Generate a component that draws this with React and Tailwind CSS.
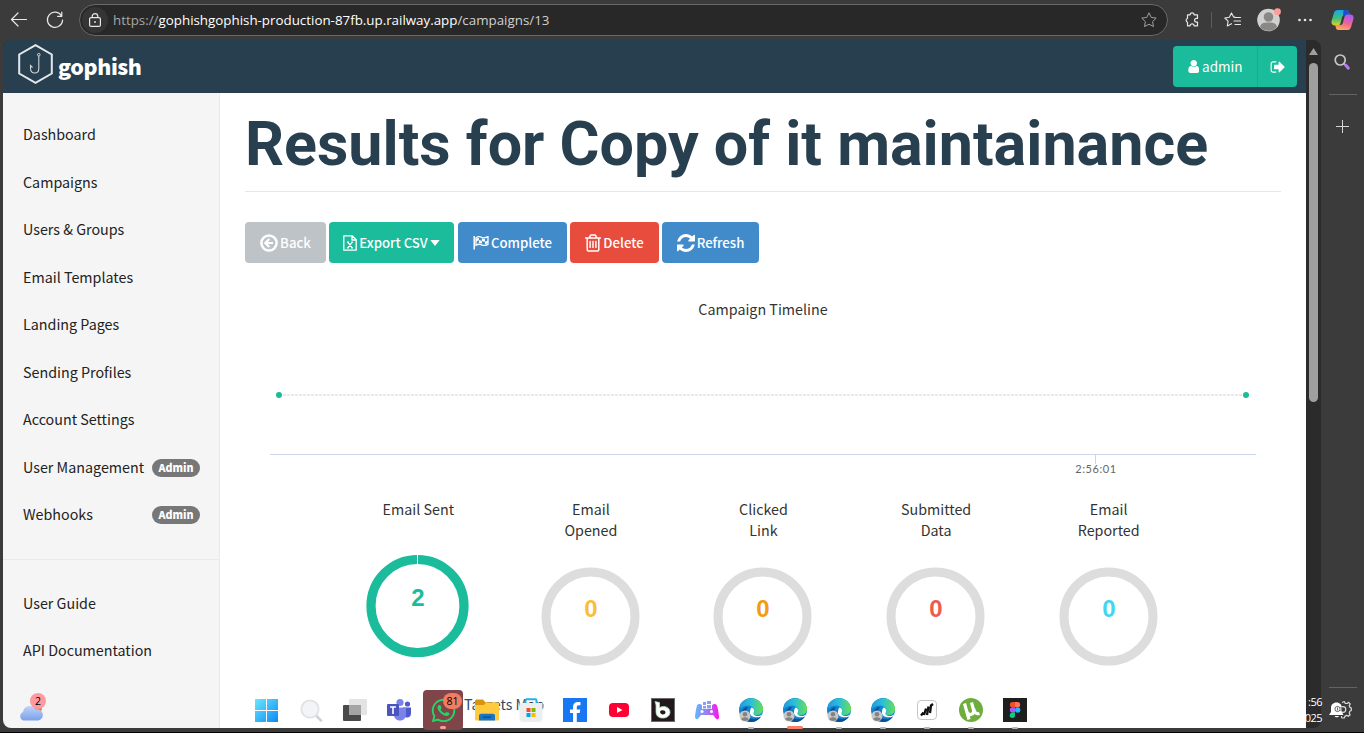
import { FaWhatsapp } from "react-icons/fa";

const FA = {
  user: {
    box: "256 128 1280 1536",
    d: "M1536 1399q0 109-62.5 187t-150.5 78h-854q-88 0-150.5-78t-62.5-187q0-85 8.5-160.5t31.5-152 58.5-131 94-89 134.5-34.5q131 128 313 128t313-128q76 0 134.5 34.5t94 89 58.5 131 31.5 152 8.5 160.5zm-256-887q0 159-112.5 271.5t-271.5 112.5-271.5-112.5-112.5-271.5 112.5-271.5 271.5-112.5 271.5 112.5 112.5 271.5z",
  },
  signOut: {
    box: "0 0 1792 1792",
    d: "M704 1440q0 4 1 20t.5 26.5-3 23.5-10 19.5-20.5 6.5h-320q-119 0-203.5-84.5t-84.5-203.5v-704q0-119 84.5-203.5t203.5-84.5h320q13 0 22.5 9.5t9.5 22.5q0 4 1 20t.5 26.5-3 23.5-10 19.5-20.5 6.5h-320q-66 0-113 47t-47 113v704q0 66 47 113t113 47h312l11.5 1 11.5 3 8 5.5 7 9 2 13.5zm928-544q0 26-19 45l-544 544q-19 19-45 19t-45-19-19-45v-288h-448q-26 0-45-19t-19-45v-384q0-26 19-45t45-19h448v-288q0-26 19-45t45-19 45 19l544 544q19 19 19 45z",
  },
  refresh: {
    box: "128 128 1536 1536",
    d: "M1639 1056q0 5-1 7-64 268-268 434.5t-478 166.5q-146 0-282.5-55t-243.5-157l-129 129q-19 19-45 19t-45-19-19-45v-448q0-26 19-45t45-19h448q26 0 45 19t19 45-19 45l-137 137q71 66 161 102t187 36q134 0 250-65t186-179q11-17 53-117 8-23 30-23h192q13 0 22.5 9.5t9.5 22.5zm25-800v448q0 26-19 45t-45 19h-448q-26 0-45-19t-19-45 19-45l138-138q-148-137-349-137-134 0-250 65t-186 179q-11 17-53 117-8 23-30 23h-199q-13 0-22.5-9.5t-9.5-22.5v-7q65-268 270-434.5t480-166.5q146 0 284 55.5t245 156.5l130-129q19-19 45-19t45 19 19 45z",
  },
  trash: {
    box: "192 128 1408 1536",
    d: "M704 736v576q0 14-9 23t-23 9h-64q-14 0-23-9t-9-23v-576q0-14 9-23t23-9h64q14 0 23 9t9 23zm256 0v576q0 14-9 23t-23 9h-64q-14 0-23-9t-9-23v-576q0-14 9-23t23-9h64q14 0 23 9t9 23zm256 0v576q0 14-9 23t-23 9h-64q-14 0-23-9t-9-23v-576q0-14 9-23t23-9h64q14 0 23 9t9 23zm128 724v-948h-896v948q0 22 7 40.5t14.5 27 10.5 8.5h832q3 0 10.5-8.5t14.5-27 7-40.5zm-672-1076h448l-48-117q-7-9-17-11h-317q-10 2-17 11zm928 32v64q0 14-9 23t-23 9h-96v948q0 83-47 143.5t-113 60.5h-832q-66 0-113-58.5t-47-141.5v-952h-96q-14 0-23-9t-9-23v-64q0-14 9-23t23-9h309l70-167q15-37 54-63t79-26h320q40 0 79 26t54 63l70 167h309q14 0 23 9t9 23z",
  },
};

function Glyph({ name, className }) {
  return (
    <svg viewBox={FA[name].box} fill="currentColor" className={`shrink-0 ${className}`}>
      <path d={FA[name].d} />
    </svg>
  );
}

function StarShape({ className }) {
  return (
    <svg viewBox="0 0 16 16" className={className} fill="none" stroke="currentColor" strokeWidth="1" strokeLinejoin="round">
      <path d="M8 .8l2.2 4.6 5 .7-3.6 3.5.9 5L8 12.2l-4.5 2.4.9-5L.8 6.1l5-.7z" />
    </svg>
  );
}

function BrowserBar() {
  return (
    <div className="flex h-10 shrink-0 items-center pl-[10px] text-[#e8e8e8]">
      <svg className="h-4 w-[18px] shrink-0" viewBox="0 0 18 16" fill="none" stroke="currentColor" strokeWidth="1.2" strokeLinecap="round" strokeLinejoin="round">
        <path d="M16.5 7.500H1.500M8 1L1.500 7.500 8 14" />
      </svg>
      <svg className="ml-[18px] h-[18px] w-[18px] shrink-0" viewBox="0 0 18 18" fill="none" stroke="currentColor" strokeWidth="1.2" strokeLinecap="round" strokeLinejoin="round">
        <path d="M15.600 5A7.600 7.600 0 1 0 16.600 9M15.800 1.200V5.300H11.600" />
      </svg>
      <div className="ml-[15px] flex h-[32px] w-[1089px] shrink-0 items-center rounded-full border border-[#686868] bg-[#282828] pl-[2px] pr-[10px]">
        <div className="flex h-[26px] w-[26px] items-center justify-center rounded-full bg-[#353535]">
          <svg className="h-[14px] w-3" viewBox="0 0 12 14" fill="none" stroke="currentColor" strokeWidth="1.2">
            <rect x=".6" y="4.600" width="10.800" height="8.800" rx="1.500" />
            <path d="M3.200 4.600V3.400a2.800 2.800 0 0 1 5.600 0v1.200" />
            <circle cx="6" cy="9" r=".9" fill="currentColor" stroke="none" />
          </svg>
        </div>
        <div className="ml-[5px] whitespace-pre font-['Open_Sans','Noto_Sans',sans-serif] text-[13.350px] leading-5 text-[#a6a6a6]">
          https://<span className="text-white">gophishgophish-production-87fb.up.railway.app</span>
          <span className="text-[#d0d0d0]">/campaigns/13</span>
        </div>
        <StarShape className="ml-auto h-4 w-4 text-[#a0a0a0]" />
      </div>
      <svg className="ml-[16px] h-4 w-4 shrink-0" viewBox="0 0 16 16" fill="none" stroke="currentColor" strokeWidth="1.2" strokeLinejoin="round">
        <path d="M3.500 2.800h2.600a2 2 0 0 1 4 0h3.400v3.600h-1a1.900 1.900 0 0 0 0 3.800h1v3.600h-3.400a2 2 0 0 0-4 0H3.500v-3.600a2 2 0 0 1 0-3.800z" />
      </svg>
      <div className="ml-[11px] h-4 w-px bg-[#5c5c5c]" />
      <svg className="ml-[12px] h-4 w-[17px] shrink-0" viewBox="0 0 17 16" fill="none" stroke="currentColor" strokeWidth="1.1" strokeLinejoin="round" strokeLinecap="round">
        <path d="M11 5L9.600 4.900 7.500.9 5.300 5.300.8 6l3.300 3.200-.8 4.800 4.200-2.300M10.500 5.500h6M10 9h6.500M11 12.500h5.500" />
      </svg>
      <svg className="ml-[16px] h-6 w-6 shrink-0" viewBox="0 0 24 24">
        <circle cx="11.500" cy="12" r="11.300" fill="#d2d0ce" />
        <circle cx="11.500" cy="9" r="4.800" fill="#8a8886" />
        <path d="M3 19c1-4 4-4.500 8.500-4.500s7.500.5 8.500 4.500a11.300 11.300 0 0 1-17 0z" fill="#8a8886" />
        <circle cx="20.500" cy="3.700" r="3.400" fill="#ff9b9b" />
      </svg>
      <svg className="ml-[16px] h-4 w-4 shrink-0" viewBox="0 0 16 16" fill="currentColor">
        <circle cx="2.500" cy="8" r="1.300" /><circle cx="8" cy="8" r="1.300" /><circle cx="13.500" cy="8" r="1.300" />
      </svg>
      <Copilot />
    </div>
  );
}

function Copilot() {
  return (
    <svg className="ml-[18px] h-[22px] w-[23px] shrink-0" viewBox="0 0 23 22">
      <defs>
        <linearGradient id="cpA" x1="0" y1="0" x2="0" y2="1"><stop offset="0" stopColor="#1aa5ee" /><stop offset=".55" stopColor="#42c078" /><stop offset="1" stopColor="#e8d21e" /></linearGradient>
        <linearGradient id="cpB" x1="0.600" y1="0" x2="0.300" y2="1"><stop offset="0" stopColor="#a95cf2" /><stop offset=".5" stopColor="#ee6298" /><stop offset="1" stopColor="#ffad58" /></linearGradient>
      </defs>
      <path d="M7 1h8.500c1.500 0 2.200 1 2.600 2.300L19 6h-5c-1.500 0-2.300.6-2.800 2L9.500 14c-.6 1.800-1.500 2.500-3.300 2.500H4c-3 0-4.200-2-3.300-5L3 3.800C3.700 1.800 5 1 7 1z" fill="url(#cpA)" />
      <path d="M12.500 1h3c1.500 0 2.200 1 2.600 2.300L19 6h-5c-.8 0-1.600.2-2 .8z" fill="#1c50c8" />
      <path d="M16 21H7.500c-1.500 0-2.200-1-2.600-2.300L4.200 16H9c1.500 0 2.300-.6 2.800-2l1.700-6c.6-1.800 1.500-2.500 3.300-2.500H19c3 0 4.200 2 3.300 5L20 18.200c-.7 2-2 2.800-4 2.800z" fill="url(#cpB)" />
    </svg>
  );
}

function EdgeRail() {
  return (
    <div className="flex w-[43px] flex-col items-center">
      <svg className="mr-px mt-[13px] h-[18px] w-[18px]" viewBox="0 0 18 18" fill="none">
        <circle cx="7.200" cy="7" r="5" stroke="#c8c8c8" strokeWidth="1.700" />
        <path d="M10.800 10.700l1.500 1.500" stroke="#c8c8c8" strokeWidth="1.500" />
        <path d="M12.800 12.300l2.400 2.700" stroke="#b57bee" strokeWidth="3.200" strokeLinecap="round" />
      </svg>
      <div className="mt-[23px] h-px w-7 bg-[#636363]" />
      <svg className="mr-px mt-[25px] h-[13px] w-[13px]" viewBox="0 0 13 13" stroke="#d6d6d6" strokeWidth="1"><path d="M6.500 0v13M0 6.500h13" /></svg>
      <div className="mt-auto h-px w-7 bg-[#636363]" />
      <svg className="mb-[8px] mr-[5px] mt-[12px] h-5 w-6" viewBox="0 0 24 20">
        <g fill="none" stroke="#dcdcdc" strokeWidth="1.200" strokeLinejoin="round">
          <path d="M14 2.500l2.300-1 1 2h1.800l1.500-1.200 1.600 1.600-1 1.800.8 1.700 1.300.7v2.400l-1.400.7-.7 1.700.9 1.800-1.700 1.600-1.700-.9-1.700.7-.7 1.900H14l-.7-1.900" />
          <circle cx="15" cy="9.500" r="2.800" />
        </g>
        <path d="M8.500 2.500c3.300 0 5.300 2.300 5.300 5.500v4l1.700 3H1l2-3V8c0-3.200 2.200-5.500 5.500-5.500z" fill="#fff" />
        <path d="M6.500 16h4.500c-.8 1.800-3.700 1.800-4.500 0z" fill="#fff" />
        <circle cx="9.500" cy="9" r="2.600" fill="none" stroke="#555" strokeWidth=".9" />
        <path d="M9.500 7.500v3M12.500 7.500c1.500-.8 2.200.8.8 1.600 1.600.2 1 2.200-.8 1.500" fill="none" stroke="#555" strokeWidth=".9" />
      </svg>
    </div>
  );
}

function TopNav() {
  return (
    <div className="flex h-[53px] shrink-0 items-start bg-[#283f50] pl-[15px] pr-[9px] text-white">
      <svg className="mt-[4px] h-10 w-[35px]" viewBox="0 0 35 40" fill="none">
        <path d="M17.500 1.200L33.800 10.500v19L17.500 38.800 1.200 29.500v-19z" stroke="#e4e8ea" strokeWidth="2" />
        <circle cx="20.800" cy="10.700" r="1.300" stroke="#cfd6da" strokeWidth="1" />
        <path d="M20.800 12v12.500c0 6-8 6-8.300 0v-3l2 2" stroke="#cfd6da" strokeWidth="1.100" />
      </svg>
      <div className="ml-[5px] mt-[10px] text-[21.400px] font-black leading-8 tracking-[-0.400px]">gophish</div>
      <div className="ml-auto mt-[6px] flex h-[41px] overflow-hidden rounded-[4px] bg-[#1abc9c] text-[13.500px]">
        <div className="flex w-[84px] items-center justify-center gap-[3px]">
          <Glyph name="user" className="h-[13px] w-[11.500px]" />
          <span>admin</span>
        </div>
        <div className="flex w-[40px] items-center justify-center border-l border-[#18ab8e]">
          <Glyph name="signOut" className="h-4 w-4" />
        </div>
      </div>
    </div>
  );
}

function NavItem({ label, admin }) {
  return (
    <div className="flex h-[47.500px] items-center justify-between pl-5 pr-[19px] text-[14.300px] text-[#222]">
      <span>{label}</span>
      {admin && <span className="mt-[3px] flex h-[18px] w-12 items-center justify-center rounded-full bg-[#777] pt-px text-[10.700px] font-black leading-none text-white">Admin</span>}
    </div>
  );
}

function SideNav() {
  const items = ["Dashboard", "Campaigns", "Users & Groups", "Email Templates", "Landing Pages", "Sending Profiles", "Account Settings"];
  return (
    <div className="w-[217px] shrink-0 border-r border-[#e9e9e9] bg-[#f5f5f5] pt-[17px]">
      {items.map((t) => <NavItem key={t} label={t} />)}
      <NavItem label="User Management" admin />
      <NavItem label="Webhooks" admin />
      <div className="mb-5 mt-[21px] h-px bg-[#e9e9e9]" />
      <div className="-mt-px">
        <NavItem label="User Guide" />
        <NavItem label="API Documentation" />
      </div>
    </div>
  );
}

function Toolbar() {
  const btn = "flex h-[41px] items-center justify-center rounded-[4px] text-[13.200px] font-medium text-white";
  return (
    <div className="mt-[30px] flex gap-[3px]">
      <div className={`${btn} w-[81px] gap-[2px] bg-[#bdc3c7]`}>
        <svg className="h-[18px] w-[18px]" viewBox="0 0 18 18" fill="none" stroke="currentColor">
          <circle cx="9" cy="9" r="7.600" strokeWidth="2.500" />
          <path d="M9.300 5L5.300 9l4 4M5.500 9h7.500" strokeWidth="2.200" />
        </svg>
        <span>Back</span>
      </div>
      <div className={`${btn} mr-px w-[125px] gap-[2px] bg-[#1abc9c]`}>
        <svg className="h-4 w-[14px]" viewBox="0 0 14 16" fill="none" stroke="currentColor" strokeWidth="1.300" strokeLinejoin="round">
          <path d="M.8.8h8.400l4 4v10.400H.8zM9 .8V5h4.200M4.800 7.200l4.400 5.600M9.200 7.200l-4.400 5.600M3.900 7.200h2M8.100 7.200h2M3.900 12.800h2M8.100 12.800h2" />
        </svg>
        <span>Export CSV</span>
        <svg className="h-[6px] w-[10px]" viewBox="0 0 10 6" fill="currentColor"><path d="M.3 0h9.400L5 6z" /></svg>
      </div>
      <div className={`${btn} w-[109px] gap-[2px] bg-[#428bca]`}>
        <svg className="h-[14px] w-4" viewBox="0 0 16 14" fill="none" stroke="currentColor">
          <path d="M1.200 0v13.500" strokeWidth="1.500" />
          <path d="M3 1.700c2.500-1.500 4-1.200 5.500-.4 2 1 4 .7 6.500-.6v7.600c-2.500 1.300-4.500 1.500-6.500.5C7 8 5.500 7.800 3 9.300z" strokeWidth="1.300" />
          <path d="M3 3c1.200-.8 2-1 2.900-1v2.500C5 4.500 4.200 4.900 3 5.600zM8.900 2.500c1 .5 2 .7 3 .5v2.700c-1 .1-2-.1-3-.6zM5.900 4.400c1-.1 2 0 3 .6v2.700c-1-.5-2-.7-3-.6zM12 5.500c1-.1 2-.6 3-1.100v2.700c-1 .5-2 1-3 1.100z" fill="currentColor" stroke="none" />
        </svg>
        <span>Complete</span>
      </div>
      <div className={`${btn} w-[89px] gap-[2px] bg-[#e74c3c]`}>
        <Glyph name="trash" className="h-[18px] w-4" />
        <span>Delete</span>
      </div>
      <div className={`${btn} w-[97px] gap-[2px] bg-[#428bca]`}>
        <Glyph name="refresh" className="h-[18px] w-[18px]" />
        <span>Refresh</span>
      </div>
    </div>
  );
}

function Timeline() {
  return (
    <div className="mt-[35px]">
      <div className="text-center text-[14.300px] leading-[21px] text-[#333]">Campaign Timeline</div>
      <svg className="mt-[61px] block h-[95px] w-[1036px]" viewBox="0 0 1036 95">
        <path d="M34 15H1001" stroke="#d4d4d4" strokeDasharray="3 1" />
        <circle cx="34" cy="15" r="3" fill="#1abc9c" />
        <circle cx="1001" cy="15" r="3" fill="#1abc9c" />
        <path d="M25 74.500H1011M850.500 75v9" stroke="#ccd6eb" />
        <text x="851" y="92.500" textAnchor="middle" fontSize="11" fill="#666" letterSpacing="0.600" className="font-['Lato',sans-serif]">2:56:01</text>
      </svg>
    </div>
  );
}

function Donut({ lines, value, color, sent }) {
  return (
    <div className="flex flex-col items-center text-[14.300px] leading-[21px] text-[#333]">
      <div className="h-[42px] text-center">{lines.map((l) => <div key={l}>{l}</div>)}</div>
      <svg className="mt-[4px] h-[130px] w-[130px]" viewBox="0 0 130 130" fill="none">
        {sent ? (
          <>
            <circle cx="64.500" cy="62" r="46.500" stroke="#1abc9c" strokeWidth="9.200" />
            <path d="M64.500 10v12" stroke="#fff" strokeWidth="1" />
            <text x="65" y="62" textAnchor="middle" fontSize="24" fontWeight="700" fill={color} className="font-['Liberation_Sans',sans-serif]">{value}</text>
          </>
        ) : (
          <>
            <circle cx="64.500" cy="72.500" r="44.500" stroke="#ddd" strokeWidth="9" />
            <text x="65" y="73" textAnchor="middle" fontSize="24" fontWeight="700" fill={color} className="font-['Liberation_Sans',sans-serif]">{value}</text>
          </>
        )}
      </svg>
    </div>
  );
}

function Results() {
  return (
    <div className="flex-1 overflow-hidden bg-white pl-[25px]">
      <div className="w-[1036px]">
        <h1 className="h-[99px] whitespace-nowrap border-b border-[#e7e7e7] pt-[16px] font-['Roboto',sans-serif] text-[61px] font-bold leading-[70px] text-[#283f50]">
          Results for Copy of it maintainance
        </h1>
        <Toolbar />
        <Timeline />
        <div className="mt-[23px] grid grid-cols-5 pl-[87px] pr-[86px]">
          <Donut lines={["Email Sent"]} value="2" color="#1abc9c" sent />
          <Donut lines={["Email", "Opened"]} value="0" color="#f9bf3b" />
          <Donut lines={["Clicked", "Link"]} value="0" color="#f39c12" />
          <Donut lines={["Submitted", "Data"]} value="0" color="#f05b4f" />
          <Donut lines={["Email", "Reported"]} value="0" color="#45d6ef" />
        </div>
        <div className="mt-[19px] pl-[219px] text-[14.300px] leading-[21px] text-[#34495e]">Targets Map</div>
      </div>
    </div>
  );
}

function EdgeIcon() {
  return (
    <svg className="h-6 w-6" viewBox="0 0 24 24">
      <circle cx="12" cy="12" r="12" fill="#1283d2" />
      <path d="M1 9C3 2 9-.5 14 .3c6 1 10 5.700 10 10.700 0 4-3 6-6.500 6-3 0-3.500-1-3-2.500C16 11 13 7.500 9 7.500 5 7.500 2 9 .5 12z" fill="url(#edgeG)" />
      <path d="M9 9c-4 4-1 12 6 12 3 0 5.500-1.500 7-3-2 4-6 6-10 6C6 24 2 20 3 14c.4-3 3-5 6-5z" fill="#0c4f94" />
      <path d="M12.500 9.500c3 1 3 3.500 2 5.500-.5 1.500 1 3 4 3 2 0 3.500-.6 4.500-1.500l-1 2c-5 2-11.500.5-11-4.500.2-2 .5-3.500 1.500-4.500z" fill="#fff" />
      <path d="M23 16.500L24 24h-7l5-4.500z" fill="#fff" />
      <circle cx="6" cy="18" r="5.500" fill="#c9c7c5" />
      <circle cx="6" cy="16.300" r="2.300" fill="#858381" />
      <path d="M2.300 21.500c.5-3 7-3 7.500 0a5.500 5.500 0 0 1-7.500 0z" fill="#858381" />
      <defs><linearGradient id="edgeG"><stop offset="0" stopColor="#1f9ae0" /><stop offset=".5" stopColor="#2cc1d4" /><stop offset="1" stopColor="#69e04e" /></linearGradient></defs>
    </svg>
  );
}

const taskIcons = [
  <svg className="h-6 w-6" viewBox="0 0 24 24">
    <defs><linearGradient id="winG" x1="0" y1="0" x2="1" y2="1"><stop offset="0" stopColor="#6be6ff" /><stop offset="1" stopColor="#0a8af5" /></linearGradient></defs>
    <path d="M0 1h11v11H0zM12 1h11v11H12zM0 13h11v11H0zM12 13h11v11H12z" fill="url(#winG)" />
  </svg>,
  <svg className="h-6 w-6" viewBox="0 0 24 24" fill="none">
    <path d="M17 17.500l5 5" stroke="#cfd3d8" strokeWidth="2.600" strokeLinecap="round" />
    <circle cx="11" cy="11" r="8.700" fill="#f3f4f5" stroke="#dfe2e5" strokeWidth="1.800" />
  </svg>,
  <svg className="h-6 w-6" viewBox="0 0 24 24">
    <rect x="0" y="7" width="18" height="16" rx="1" fill="#4a4a4a" />
    <rect x="6" y="1" width="18" height="16" rx="1" fill="#e3e3e3" />
    <rect x="6" y="7" width="12" height="10" fill="#a4a4a4" />
  </svg>,
  <svg className="h-6 w-6" viewBox="0 0 24 24">
    <circle cx="20.500" cy="6" r="2.600" fill="#5059c9" /><path d="M16 9.500h8v6c0 5-6 5-7 2z" fill="#5059c9" />
    <circle cx="13" cy="4.500" r="3.600" fill="#7b83eb" /><path d="M7 9.500h12v7c0 8-12 8-12 0z" fill="#7b83eb" />
    <rect x="0" y="6" width="12" height="12" rx="1" fill="#4b53bc" />
    <path d="M3 9h6M6 9v7" stroke="#fff" strokeWidth="1.600" />
  </svg>,
  <div className="relative flex h-10 w-10 items-center justify-center rounded-[4px] bg-[#7f4549]">
    <FaWhatsapp className="h-[27px] w-[27px] text-[#25d366]" />
    <span className="absolute right-px top-[3px] flex h-4 w-[19px] items-center justify-center rounded-full bg-[#f27c62] font-['Open_Sans',sans-serif] text-[10.500px] leading-none text-black">81</span>
    <span className="absolute bottom-px left-[17px] h-[3px] w-[6px] rounded-full bg-[#ff9a9a]" />
  </div>,
  <svg className="h-6 w-6" viewBox="0 0 24 24">
    <path d="M0 3.500C0 2 1 1.500 2 1.500h6l2.500 3H22v6H0z" fill="#d9940a" />
    <path d="M0 7h9l2-2.500h11.500c1 0 1.500.5 1.500 1.500v15c0 1-.5 1.500-1.500 1.500h-21C.5 22.500 0 22 0 21z" fill="#ffca3e" />
    <path d="M4 22.500V18c0-1.500.8-2.300 2.300-2.300h11.400c1.500 0 2.300.8 2.300 2.300v4.500z" fill="#1576c8" />
    <path d="M8 19.200h8" stroke="#0c4f94" strokeWidth="1.400" />
  </svg>,
  <svg className="h-6 w-6" viewBox="0 0 24 24">
    <path d="M6.500 6V2.500c0-.8.4-1.200 1.200-1.200h8.600c.8 0 1.200.4 1.200 1.200V6" fill="none" stroke="#29aee8" strokeWidth="2" />
    <path d="M.5 5h23v15c0 2.500-1.500 4-4 4h-15c-2.500 0-4-1.500-4-4z" fill="#eceef0" />
    <path d="M7.500 10h4v4h-4z" fill="#f25022" /><path d="M12.500 10h4v4h-4z" fill="#7fba00" />
    <path d="M7.500 15h4v4h-4z" fill="#00a4ef" /><path d="M12.500 15h4v4h-4z" fill="#ffb900" />
  </svg>,
  <svg className="h-6 w-6" viewBox="0 0 24 24">
    <path d="M0 0h24v24H0z" fill="#1877f2" />
    <path d="M10 24v-9H7v-3.500h3V9c0-3.200 2-5 5-5h2.500v3.300H16c-1.600 0-2.200.8-2.200 2v2.200h3.500l-.6 3.500h-2.900v9z" fill="#fff" />
  </svg>,
  <svg className="h-6 w-6" viewBox="0 0 24 24"><rect x="2" y="5" width="20" height="14" rx="4" fill="#ff0033" /><path d="M10 9l5.500 3-5.500 3z" fill="#fff" /></svg>,
  <svg className="h-6 w-6" viewBox="0 0 24 24">
    <path d="M0 0h24v24H0z" fill="#6b6b6b" /><path d="M1 1h22v22H1z" fill="#24181f" />
    <path d="M4 3.500l4.500 1v5c5-2.500 10.500 0 10.500 4.800 0 7.500-14 8-14 0V7z" fill="#fff" stroke="#9fe0aa" strokeWidth=".8" />
    <path d="M9 13.500c1.500-2 5.500-1.500 5.500 1s-5.500 3-5.500-1z" fill="#24181f" />
  </svg>,
  <svg className="h-6 w-6" viewBox="0 0 24 24">
    <defs><linearGradient id="padG"><stop offset="0" stopColor="#62b8ff" /><stop offset=".5" stopColor="#9b7df5" /><stop offset="1" stopColor="#ff10e8" /></linearGradient></defs>
    <path d="M8 4h3v3H8zM12 3h4v3h-4zM8 8h3v2.500H8zM12 7h4v3.500h-4z" fill="#8d9cf5" />
    <path d="M2 7.500C3 5.500 6 5.500 7 7.500V11h10V7.500c1-2 4-2 5 0 1 3.500 1.700 8 2 11.500.2 2.800-2.800 3-4 .5L18 17H6l-2 2.500C2.800 22 .2 21.500 0 19c.3-3.500 1-8 2-11.500z" fill="url(#padG)" />
    <circle cx="7" cy="13.500" r="1.500" fill="#fff" /><circle cx="16.500" cy="13.500" r="1.500" fill="#fff" />
  </svg>,
  <EdgeIcon />,
  <div className="relative flex h-6 w-6"><EdgeIcon /><span className="absolute left-[4px] top-[28px] h-[3px] w-4 rounded-full bg-[#f4806a]" /></div>,
  <EdgeIcon />,
  <EdgeIcon />,
  <svg className="h-6 w-6" viewBox="0 0 24 24">
    <rect x="2.500" y="2.500" width="19" height="19" rx="3.500" fill="#fff" stroke="#c6c6c6" />
    <path d="M6 17.500l2.500-3M9 17l2-6.500M12 17l1.500-8.500M15 15l1-7.500 2-1.500" fill="none" stroke="#111" strokeWidth="2.300" strokeLinejoin="round" />
  </svg>,
  <svg className="h-6 w-6" viewBox="0 0 24 24">
    <circle cx="12" cy="12" r="12" fill="#6fad3e" />
    <path d="M5.500 5.500l4.500 16M6.500 9c1 5 2.500 8 5.500 7.500 3-.6 3-3.500 2-6.500l-1.500-5.500M14.500 10.500c1 4 2.500 6 6 5" fill="none" stroke="#fff" strokeWidth="3.200" />
  </svg>,
  <svg className="h-6 w-6" viewBox="0 0 24 24">
    <path d="M0 0h24v24H0z" fill="#1e1e1e" />
    <path d="M12 4H9.500a2.650 2.650 0 0 0 0 5.300H12z" fill="#f24e1e" /><path d="M12 4h2.500a2.650 2.650 0 0 1 0 5.300H12z" fill="#ff7262" />
    <path d="M12 9.300H9.500a2.650 2.650 0 0 0 0 5.300H12z" fill="#a259ff" /><circle cx="14.700" cy="12" r="2.650" fill="#1abcfe" />
    <path d="M12 14.600H9.500A2.650 2.650 0 1 0 12 17.300z" fill="#0acf83" />
  </svg>,
];

function Taskbar() {
  return (
    <div className="absolute bottom-0 left-0 flex h-12 w-full">
      <div className="w-[245px] pl-[18px] pt-[8px]">
        <div className="relative h-8 w-8">
          <svg className="absolute left-0 top-[12px] h-[17px] w-[26px]" viewBox="0 0 26 17">
            <defs><linearGradient id="cloudG" x1="0" y1="0" x2="0" y2="1"><stop offset="0" stopColor="#bfd5fa" /><stop offset="1" stopColor="#7aa0e8" /></linearGradient></defs>
            <circle cx="20" cy="4" r="4" fill="#ef7d1e" />
            <path d="M5.500 16.500A4.500 4.500 0 0 1 5 8a7 7 0 0 1 13-2.500 5.500 5.500 0 0 1 2.500 11z" fill="url(#cloudG)" />
          </svg>
          <span className="absolute left-[12px] top-px flex h-4 w-4 items-center justify-center rounded-full bg-[#ff99a0] font-['Open_Sans',sans-serif] text-[10.500px] leading-none text-black">2</span>
        </div>
      </div>
      {taskIcons.map((icon, i) => (
        <div key={i} className="relative flex h-[52px] w-11 items-center justify-center">
          {icon}
          {i > 10 && i !== 12 && <span className="absolute bottom-[7px] h-[2px] w-[6px] rounded-full bg-[#b5b5b5]" />}
        </div>
      ))}
      <div className="ml-auto mr-[42px] flex flex-col items-end whitespace-nowrap pt-[10px] font-['Open_Sans',sans-serif] text-[11px] leading-[16px] tracking-[-0.500px] text-white">
        <div>:56</div>
        <div>025</div>
      </div>
    </div>
  );
}

export default function App() {
  return (
    <div className="relative flex h-[733px] w-[1364px] flex-col overflow-hidden border-b border-black bg-[#3b3b3b] font-['Noto_Sans_CJK_SC','Noto_Sans',sans-serif]">
      <BrowserBar />
      <div className="flex h-[688px] pl-[3px]">
        <div className="flex w-[1318px] overflow-hidden rounded-lg bg-[#2b2b2b]">
          <div className="flex w-[1303px] flex-col">
            <TopNav />
            <div className="flex min-h-0 flex-1">
              <SideNav />
              <Results />
            </div>
          </div>
          <div className="flex flex-1 flex-col items-center pt-[8px]">
            <svg className="h-[7px] w-[9px]" viewBox="0 0 9 7"><path d="M4.500 0L9 7H0z" fill="#9f9f9f" /></svg>
            <div className="mt-[8px] h-[339px] w-[9px] rounded-full bg-[#9f9f9f]" />
          </div>
        </div>
        <EdgeRail />
      </div>
      <Taskbar />
    </div>
  );
}
